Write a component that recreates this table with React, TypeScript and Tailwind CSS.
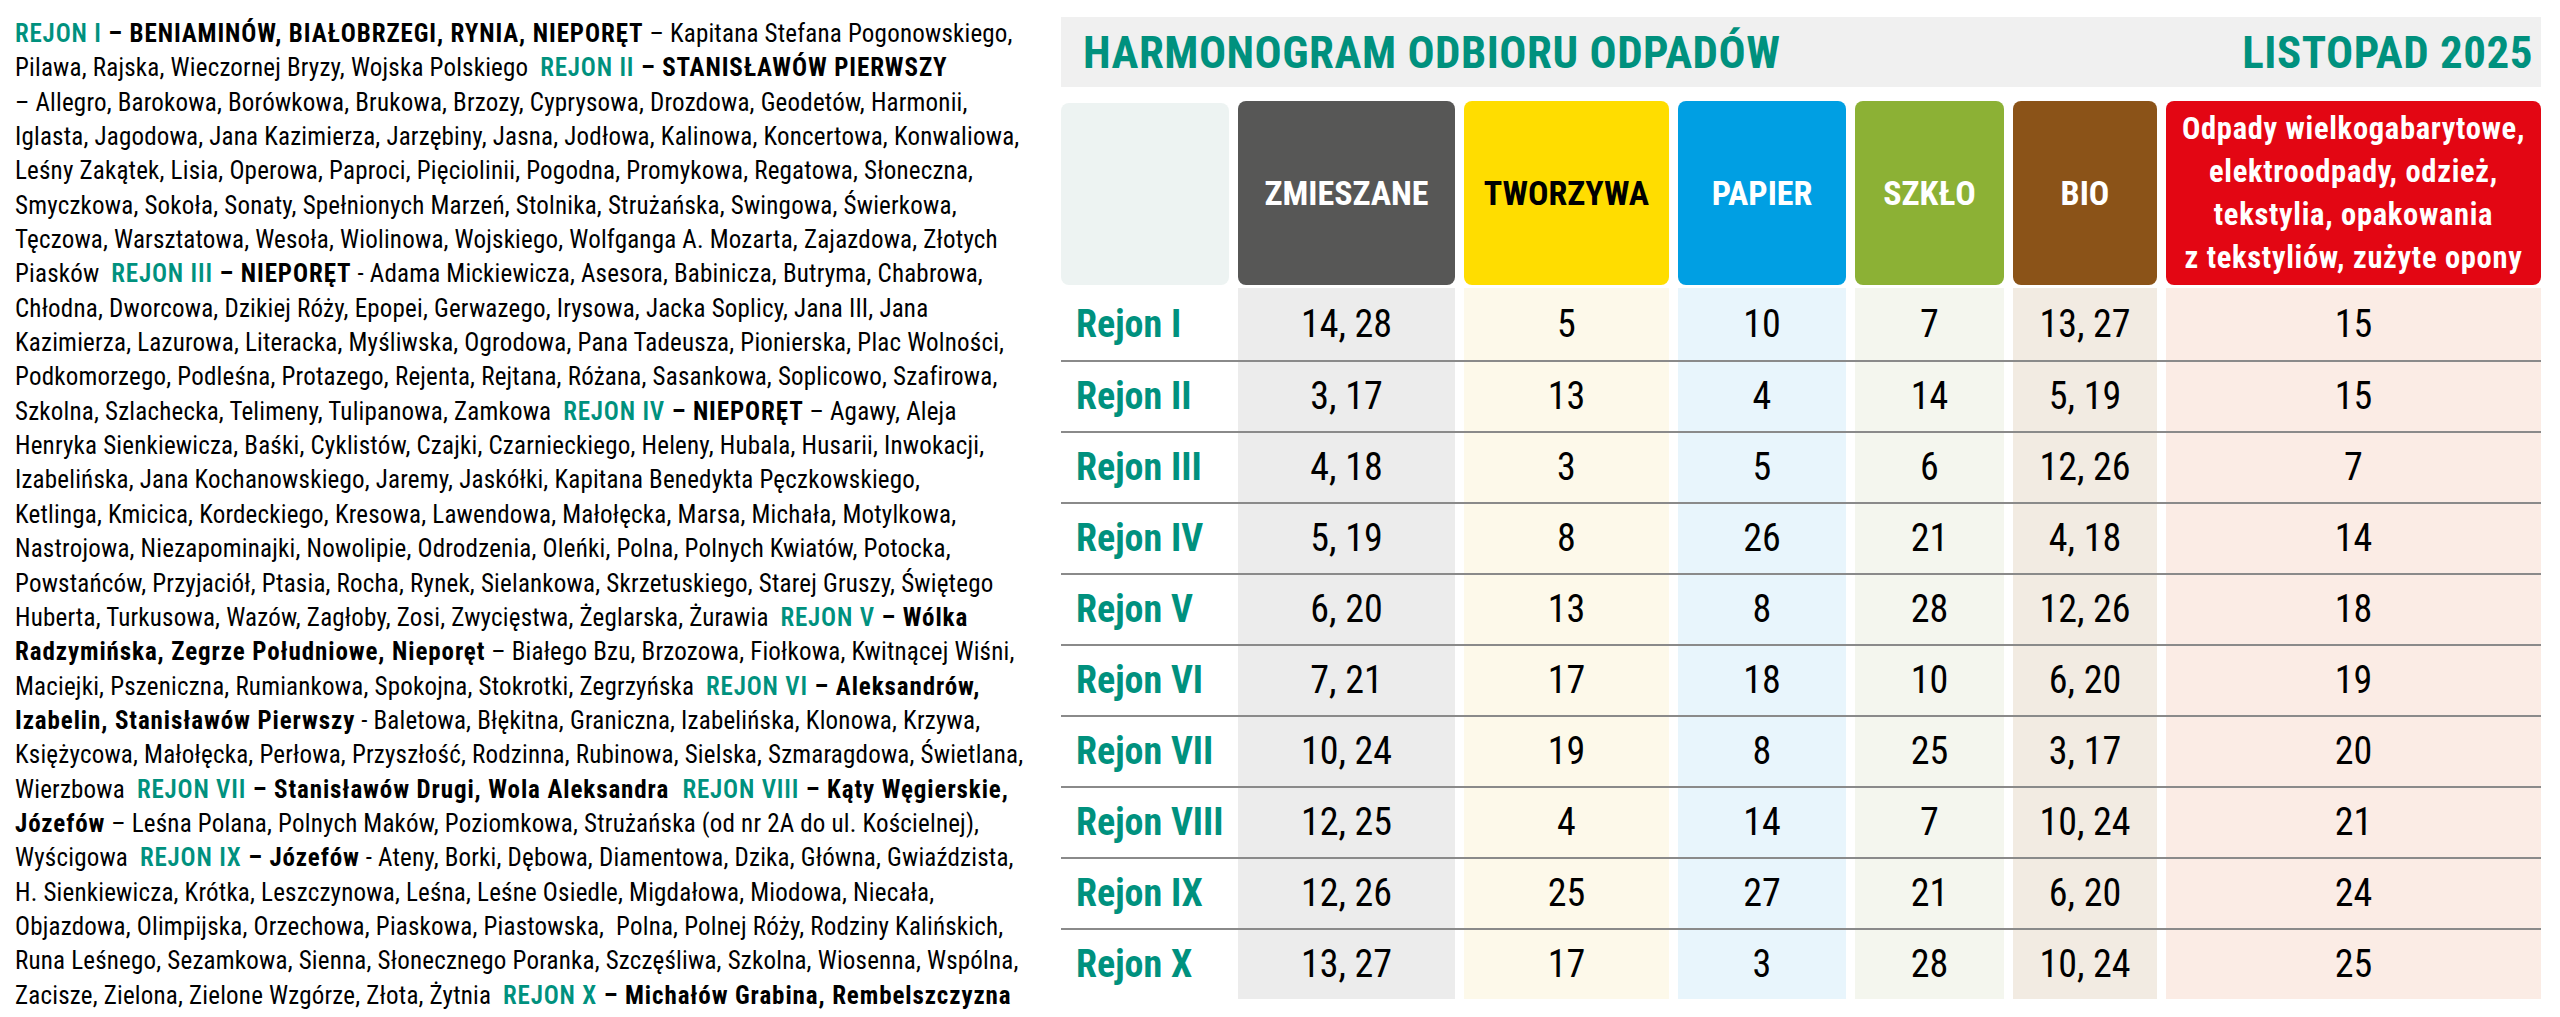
import React from 'react';

type Seg = [0 | 1 | 2, string];

// 0 = regular, 1 = teal region label, 2 = bold black names
const lines: Seg[][] = [
  [[1, 'REJON I'], [2, ' – BENIAMINÓW, BIAŁOBRZEGI, RYNIA, NIEPORĘT'], [0, ' – Kapitana Stefana Pogonowskiego,']],
  [[0, 'Pilawa, Rajska, Wieczornej Bryzy, Wojska Polskiego  '], [1, 'REJON II'], [2, ' – STANISŁAWÓW PIERWSZY']],
  [[0, '– Allegro, Barokowa, Borówkowa, Brukowa, Brzozy, Cyprysowa, Drozdowa, Geodetów, Harmonii,']],
  [[0, 'Iglasta, Jagodowa, Jana Kazimierza, Jarzębiny, Jasna, Jodłowa, Kalinowa, Koncertowa, Konwaliowa,']],
  [[0, 'Leśny Zakątek, Lisia, Operowa, Paproci, Pięciolinii, Pogodna, Promykowa, Regatowa, Słoneczna,']],
  [[0, 'Smyczkowa, Sokoła, Sonaty, Spełnionych Marzeń, Stolnika, Strużańska, Swingowa, Świerkowa,']],
  [[0, 'Tęczowa, Warsztatowa, Wesoła, Wiolinowa, Wojskiego, Wolfganga A. Mozarta, Zajazdowa, Złotych']],
  [[0, 'Piasków  '], [1, 'REJON III'], [2, ' – NIEPORĘT'], [0, ' - Adama Mickiewicza, Asesora, Babinicza, Butryma, Chabrowa,']],
  [[0, 'Chłodna, Dworcowa, Dzikiej Róży, Epopei, Gerwazego, Irysowa, Jacka Soplicy, Jana III, Jana']],
  [[0, 'Kazimierza, Lazurowa, Literacka, Myśliwska, Ogrodowa, Pana Tadeusza, Pionierska, Plac Wolności,']],
  [[0, 'Podkomorzego, Podleśna, Protazego, Rejenta, Rejtana, Różana, Sasankowa, Soplicowo, Szafirowa,']],
  [[0, 'Szkolna, Szlachecka, Telimeny, Tulipanowa, Zamkowa  '], [1, 'REJON IV'], [2, ' – NIEPORĘT'], [0, ' – Agawy, Aleja']],
  [[0, 'Henryka Sienkiewicza, Baśki, Cyklistów, Czajki, Czarnieckiego, Heleny, Hubala, Husarii, Inwokacji,']],
  [[0, 'Izabelińska, Jana Kochanowskiego, Jaremy, Jaskółki, Kapitana Benedykta Pęczkowskiego,']],
  [[0, 'Ketlinga, Kmicica, Kordeckiego, Kresowa, Lawendowa, Małołęcka, Marsa, Michała, Motylkowa,']],
  [[0, 'Nastrojowa, Niezapominajki, Nowolipie, Odrodzenia, Oleńki, Polna, Polnych Kwiatów, Potocka,']],
  [[0, 'Powstańców, Przyjaciół, Ptasia, Rocha, Rynek, Sielankowa, Skrzetuskiego, Starej Gruszy, Świętego']],
  [[0, 'Huberta, Turkusowa, Wazów, Zagłoby, Zosi, Zwycięstwa, Żeglarska, Żurawia  '], [1, 'REJON V'], [2, ' – Wólka']],
  [[2, 'Radzymińska, Zegrze Południowe, Nieporęt'], [0, ' – Białego Bzu, Brzozowa, Fiołkowa, Kwitnącej Wiśni,']],
  [[0, 'Maciejki, Pszeniczna, Rumiankowa, Spokojna, Stokrotki, Zegrzyńska  '], [1, 'REJON VI'], [2, ' – Aleksandrów,']],
  [[2, 'Izabelin, Stanisławów Pierwszy'], [0, ' - Baletowa, Błękitna, Graniczna, Izabelińska, Klonowa, Krzywa,']],
  [[0, 'Księżycowa, Małołęcka, Perłowa, Przyszłość, Rodzinna, Rubinowa, Sielska, Szmaragdowa, Świetlana,']],
  [[0, 'Wierzbowa  '], [1, 'REJON VII'], [2, ' – Stanisławów Drugi, Wola Aleksandra  '], [1, 'REJON VIII'], [2, ' – Kąty Węgierskie,']],
  [[2, 'Józefów'], [0, ' – Leśna Polana, Polnych Maków, Poziomkowa, Strużańska (od nr 2A do ul. Kościelnej),']],
  [[0, 'Wyścigowa  '], [1, 'REJON IX'], [2, ' – Józefów'], [0, ' - Ateny, Borki, Dębowa, Diamentowa, Dzika, Główna, Gwiaździsta,']],
  [[0, 'H. Sienkiewicza, Krótka, Leszczynowa, Leśna, Leśne Osiedle, Migdałowa, Miodowa, Niecała,']],
  [[0, 'Objazdowa, Olimpijska, Orzechowa, Piaskowa, Piastowska,  Polna, Polnej Róży, Rodziny Kalińskich,']],
  [[0, 'Runa Leśnego, Sezamkowa, Sienna, Słonecznego Poranka, Szczęśliwa, Szkolna, Wiosenna, Wspólna,']],
  [[0, 'Zacisze, Zielona, Zielone Wzgórze, Złota, Żytnia  '], [1, 'REJON X'], [2, ' – Michałów Grabina, Rembelszczyzna']],
];

const segClass = [
  'font-normal text-black tracking-[0.2px]',
  'font-semibold text-[#00917e] tracking-[0.8px]',
  'font-bold text-black tracking-[0.9px]',
];

const rows: [string, string, string, string, string, string, string][] = [
  ['Rejon I', '14, 28', '5', '10', '7', '13, 27', '15'],
  ['Rejon II', '3, 17', '13', '4', '14', '5, 19', '15'],
  ['Rejon III', '4, 18', '3', '5', '6', '12, 26', '7'],
  ['Rejon IV', '5, 19', '8', '26', '21', '4, 18', '14'],
  ['Rejon V', '6, 20', '13', '8', '28', '12, 26', '18'],
  ['Rejon VI', '7, 21', '17', '18', '10', '6, 20', '19'],
  ['Rejon VII', '10, 24', '19', '8', '25', '3, 17', '20'],
  ['Rejon VIII', '12, 25', '4', '14', '7', '10, 24', '21'],
  ['Rejon IX', '12, 26', '25', '27', '21', '6, 20', '24'],
  ['Rejon X', '13, 27', '17', '3', '28', '10, 24', '25'],
];

const tints = ['bg-[#ececec]', 'bg-[#fdf9ea]', 'bg-[#e8f5fc]', 'bg-[#f4f6ee]', 'bg-[#f2ebe2]', 'bg-[#fbece5]'];

const cols = 'grid grid-cols-[168px_217px_205px_168px_149px_144px_375px] gap-x-[9px]';

const App: React.FC = () => {
  return (
    <div className="w-[2560px] h-[1017px] bg-white flex font-['Roboto_Condensed','Roboto','Liberation_Sans',sans-serif] font-stretch-condensed overflow-hidden">
      {/* street list */}
      <div className="w-[1040px] shrink-0 pl-[15px] pt-[17px] text-[25px] leading-[34.35px]">
        {lines.map((line, i) => (
          <div key={i} className="whitespace-pre">
            {line.map(([kind, text], j) => (
              <span key={j} className={segClass[kind]}>{text}</span>
            ))}
          </div>
        ))}
      </div>

      {/* schedule */}
      <div className="w-[1480px] ml-[21px] pt-[17px] flex flex-col">
        <div className="h-[70px] bg-[#f0f0f0] flex items-center justify-between pl-[22px] pr-[8px] text-[#00917e] font-bold text-[45px] leading-none tracking-[0.5px]">
          <span>HARMONOGRAM ODBIORU ODPADÓW</span>
          <span>LISTOPAD 2025</span>
        </div>

        <div className={`${cols} mt-[14px] h-[184px] text-[34px] font-bold leading-none`}>
          <div className="mt-[2px] rounded-[8px] bg-[#edf3f2]" />
          <div className="rounded-[8px] bg-[#575756] text-white flex items-center justify-center">ZMIESZANE</div>
          <div className="rounded-[8px] bg-[#ffdd00] text-black flex items-center justify-center">TWORZYWA</div>
          <div className="rounded-[8px] bg-[#009fe3] text-white flex items-center justify-center">PAPIER</div>
          <div className="rounded-[8px] bg-[#8cb135] text-white flex items-center justify-center">SZKŁO</div>
          <div className="rounded-[8px] bg-[#8b5318] text-white flex items-center justify-center">BIO</div>
          <div className="rounded-[8px] bg-[#e30613] text-white flex items-center justify-center text-center text-[30.5px] leading-[43px] tracking-[0.7px]">
            <span>
              Odpady wielkogabarytowe,<br />
              elektroodpady, odzież,<br />
              tekstylia, opakowania<br />
              z tekstyliów, zużyte opony
            </span>
          </div>
        </div>

        <div className="mt-[3px] flex flex-col">
          {rows.map((r, i) => (
            <div
              key={r[0]}
              className={`${cols} ${i === 0 ? 'h-[72px]' : 'h-[71px] border-t-2 border-[#8a8a8a]'} ${i === rows.length - 1 ? 'h-[70px]' : ''}`}
            >
              <div className="flex items-center pl-[15px] text-[38px] font-bold text-[#00917e]">{r[0]}</div>
              {r.slice(1).map((v, j) => (
                <div key={j} className={`${tints[j]} flex items-center justify-center text-[38px] text-black`}>
                  {v}
                </div>
              ))}
            </div>
          ))}
        </div>
      </div>
    </div>
  );
};

export default App;
